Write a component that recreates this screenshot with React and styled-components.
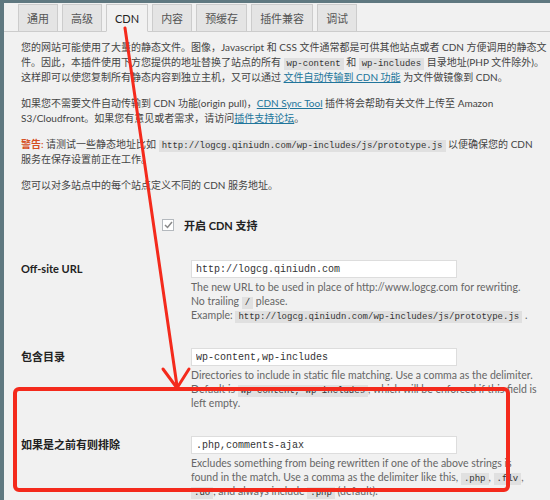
import React from 'react';
import styled, { createGlobalStyle } from 'styled-components';

const GlobalStyle = createGlobalStyle`
  body {
    margin: 0;
    overflow: hidden;
    background: #f1f1f1;
  }
`;

const Frame = styled.div`
  position: relative;
  width: 550px;
  height: 500px;
  overflow: hidden;
`;

const Page = styled.div`
  box-sizing: border-box;
  width: 550px;
  height: 500px;
  border-left: 4px solid #5f7880;
  border-top: 3px solid #5f7880;
  background: #f1f1f1;
  font-family: Lato, "Noto Sans CJK SC", sans-serif;
  color: #444;
`;

const TabBar = styled.nav`
  display: flex;
  align-items: flex-start;
  gap: 4px;
  height: 27px;
  padding: 1px 0 0 14px;
  border-bottom: 1px solid #ccc;
`;

const Tab = styled.div`
  box-sizing: border-box;
  height: 28px;
  padding: 0 8px;
  display: flex;
  align-items: center;
  font-size: 11px;
  border: 1px solid #ccc;
  border-bottom-color: ${p => (p.$active ? '#f1f1f1' : '#ccc')};
  background: ${p => (p.$active ? '#f1f1f1' : '#e4e4e4')};
  color: ${p => (p.$active ? '#222' : '#555')};
`;

const Content = styled.div`
  padding: 8px 0 0 17px;
`;

const Intro = styled.div`
  display: flex;
  flex-direction: column;
  gap: 11px;
`;

const Para = styled.p`
  margin: 0;
  font-size: 10px;
  line-height: 15px;
  white-space: nowrap;
`;

const Code = styled.code`
  font-family: "Liberation Mono", monospace;
  font-size: 9px;
  line-height: 1;
  background: rgba(0, 0, 0, 0.07);
  padding: 1px 3px;
  color: #333;
`;

const Link = styled.a`
  color: #21759b;
  text-decoration: underline;
`;

const Warn = styled.span`
  color: #d54e21;
  font-weight: 600;
`;

const CheckRow = styled.label`
  display: flex;
  align-items: center;
  gap: 10px;
  height: 16px;
  margin-top: 24px;
  padding-left: 141px;
  font-size: 11px;
  font-weight: 700;
  color: #222;
`;

const CheckBox = styled.span`
  box-sizing: border-box;
  width: 12px;
  height: 12px;
  border: 1px solid #b4b9be;
  background: #fff;
  display: flex;
  align-items: center;
  justify-content: center;
`;

const Form = styled.div`
  display: flex;
  flex-direction: column;
  gap: 26px;
  margin-top: 27px;
`;

const Row = styled.div`
  display: grid;
  grid-template-columns: 170px 1fr;
`;

const Label = styled.div`
  font-size: 11px;
  line-height: 18px;
  font-weight: 700;
  color: #222;
`;

const Field = styled.div`
  display: flex;
  flex-direction: column;
`;

const TextInput = styled.input`
  box-sizing: border-box;
  width: 266px;
  height: 18px;
  margin: 0;
  padding: 0 4px;
  border: 1px solid #ddd;
  background: #fff;
  font-family: "Liberation Mono", monospace;
  font-size: 10px;
  color: #333;
  outline: none;
`;

const Desc = styled.p`
  margin: 2px 0 0;
  font-size: 10.5px;
  line-height: 14px;
  color: #666;
  white-space: nowrap;
`;

const Overlay = styled.svg`
  position: absolute;
  top: 0;
  left: 0;
  pointer-events: none;
`;

const tabs = ['通用', '高级', 'CDN', '内容', '预缓存', '插件兼容', '调试'];

export default function App() {
  return (
    <Frame>
      <GlobalStyle />
      <Page>
        <TabBar>
          {tabs.map(t => (
            <Tab key={t} $active={t === 'CDN'}>{t}</Tab>
          ))}
        </TabBar>
        <Content>
          <Intro>
            <Para>
              您的网站可能使用了大量的静态文件。图像，Javascript 和 CSS 文件通常都是可供其他站点或者 CDN 方便调用的静态文<br />
              件。因此，本插件使用下方您提供的地址替换了站点的所有 <Code>wp-content</Code> 和 <Code>wp-includes</Code> 目录地址(PHP 文件除外)。<br />
              这样即可以使您复制所有静态内容到独立主机，又可以通过 <Link>文件自动传输到 CDN 功能</Link> 为文件做镜像到 CDN。
            </Para>
            <Para>
              如果您不需要文件自动传输到 CDN 功能(origin pull)，<Link>CDN Sync Tool</Link> 插件将会帮助有关文件上传至 Amazon<br />
              S3/Cloudfront。如果您有意见或者需求，请访问<Link>插件支持论坛</Link>。
            </Para>
            <Para>
              <Warn>警告:</Warn> 请测试一些静态地址比如 <Code>http://logcg.qiniudn.com/wp-includes/js/prototype.js</Code> 以便确保您的 CDN<br />
              服务在保存设置前正在工作。
            </Para>
            <Para>您可以对多站点中的每个站点定义不同的 CDN 服务地址。</Para>
          </Intro>

          <CheckRow>
            <CheckBox>
              <svg width="9" height="8" viewBox="0 0 9 8">
                <polyline points="1,4 3.5,6.5 8,1" fill="none" stroke="#888" strokeWidth="1.5" />
              </svg>
            </CheckBox>
            开启 CDN 支持
          </CheckRow>

          <Form>
            <Row>
              <Label>Off-site URL</Label>
              <Field>
                <TextInput readOnly value="http://logcg.qiniudn.com" />
                <Desc>
                  The new URL to be used in place of http://www.logcg.com for rewriting.<br />
                  No trailing <Code>/</Code> please.<br />
                  Example: <Code>http://logcg.qiniudn.com/wp-includes/js/prototype.js</Code> .
                </Desc>
              </Field>
            </Row>
            <Row>
              <Label>包含目录</Label>
              <Field>
                <TextInput readOnly value="wp-content,wp-includes" />
                <Desc>
                  Directories to include in static file matching. Use a comma as the delimiter.<br />
                  Default is <Code>wp-content, wp-includes</Code>, which will be enforced if this field is<br />
                  left empty.
                </Desc>
              </Field>
            </Row>
            <Row>
              <Label>如果是之前有则排除</Label>
              <Field>
                <TextInput readOnly value=".php,comments-ajax" />
                <Desc>
                  Excludes something from being rewritten if one of the above strings is<br />
                  found in the match. Use a comma as the delimiter like this, <Code>.php</Code>, <Code>.flv</Code>,<br />
                  <Code>.do</Code>, and always include <Code>.php</Code> (default).
                </Desc>
              </Field>
            </Row>
          </Form>
        </Content>
      </Page>
      <Overlay width="550" height="500" viewBox="0 0 550 500">
        <g stroke="#f42a1c" fill="none" strokeLinecap="round" strokeLinejoin="round">
          <line x1="125" y1="28" x2="177" y2="386" strokeWidth="3" />
          <polyline points="163,369 177,388 189,369" strokeWidth="3" />
          <rect x="15" y="389" width="493" height="101" rx="4" strokeWidth="4" />
        </g>
      </Overlay>
    </Frame>
  );
}
